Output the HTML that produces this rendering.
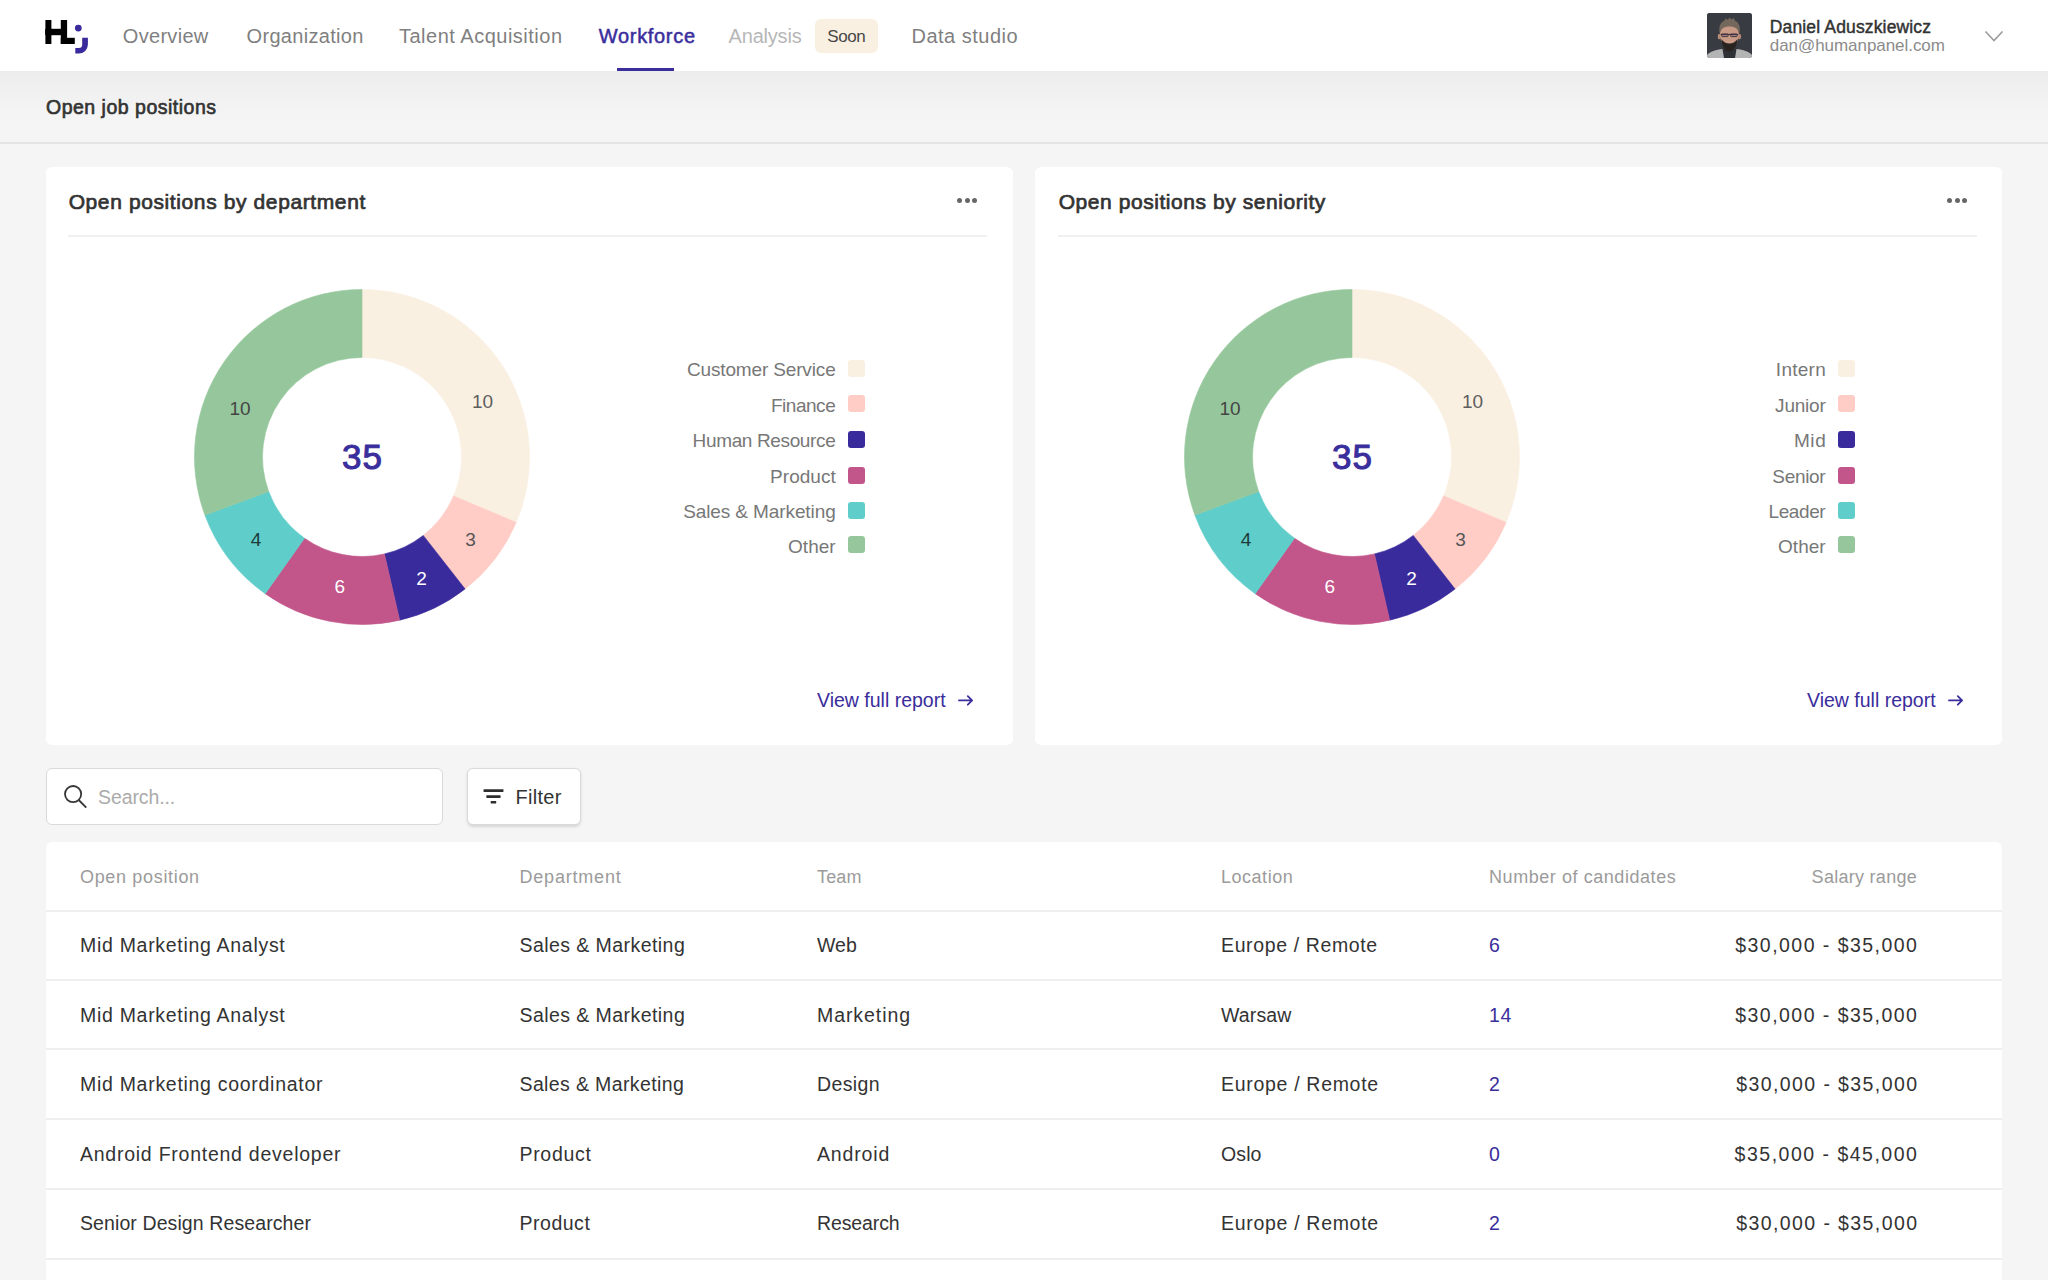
<!DOCTYPE html>
<html><head><meta charset="utf-8">
<style>
*{margin:0;padding:0;box-sizing:border-box}
html,body{width:2048px;height:1280px;overflow:hidden;background:#f5f5f5;font-family:"Liberation Sans",sans-serif;color:#333}
.a{position:absolute;white-space:nowrap;line-height:1}
#hdr{position:absolute;left:0;top:0;width:2048px;height:71px;background:#fff;z-index:2}
#sub{position:absolute;left:0;top:71px;width:2048px;height:73px;background:linear-gradient(#ececec 0px,#f0f0f0 18px,#f4f4f4 42px,#f5f5f5 60px);border-bottom:2px solid #e4e4e4}
.nav{font-size:20px;color:#7f7f7f;letter-spacing:0.3px}
.card{position:absolute;background:#fff;border-radius:6px}
.ttl{font-size:21px;font-weight:normal;color:#333;-webkit-text-stroke:0.7px #333;letter-spacing:0.1px}
.hr{position:absolute;height:2px;background:#f0f0f0}
.dot{position:absolute;width:5px;height:5px;border-radius:50%;background:#676767}
.lg{font-size:19px;color:#777;letter-spacing:-0.15px}
.sq{position:absolute;width:17px;height:17px;border-radius:3px}
.lbl{font-size:19px;text-align:center;width:40px}
.vfr{font-size:19.5px;color:#3a2d9c}
.th{font-size:18px;color:#9b9b9b;letter-spacing:0.55px}
.td{font-size:19.5px;color:#333;letter-spacing:0.55px}
.sal{letter-spacing:1.4px}
.rowline{position:absolute;left:0;width:1956px;height:2px;background:#efefef}
</style></head><body>

<div id="hdr">
  <!-- logo -->
  <svg class="a" style="left:0;top:0" width="100" height="71" viewBox="0 0 100 71">
    <rect x="45.4" y="20" width="6" height="24" fill="#000"/>
    <rect x="45.2" y="28.8" width="21.8" height="6.4" fill="#000"/>
    <rect x="60.8" y="20" width="6.3" height="24" fill="#000"/>
    <rect x="60.8" y="37.8" width="14" height="6.2" fill="#000"/>
    <circle cx="78.3" cy="28.1" r="3.4" fill="#3a2b9c"/>
    <path d="M82.2 37.85H87.9V44.4A9.2 9.2 0 0 1 78.7 53.6H75.3V48.1H78.7A3.5 3.5 0 0 0 82.2 44.6Z" fill="#3a2b9c"/>
  </svg>
  <div class="a nav" style="left:122.8px;top:26px">Overview</div>
  <div class="a nav" style="left:246.6px;top:26px">Organization</div>
  <div class="a nav" style="left:399px;top:26px;letter-spacing:0.5px">Talent Acquisition</div>
  <div class="a nav" style="left:598.8px;top:26px;color:#3a2d9c;-webkit-text-stroke:0.5px #3a2d9c;letter-spacing:0.68px">Workforce</div>
  <div class="a" style="left:617px;top:68px;width:57px;height:3px;background:#3a2d9c"></div>
  <div class="a nav" style="left:728.6px;top:26px;color:#b7b7b7;letter-spacing:-0.2px">Analysis</div>
  <div class="a" style="left:815px;top:18.5px;width:62.5px;height:34px;background:#faf0e1;border-radius:6px"></div>
  <div class="a" style="left:827.3px;top:27.5px;font-size:17px;color:#474747;letter-spacing:-0.45px">Soon</div>
  <div class="a nav" style="left:911.5px;top:26px;letter-spacing:0.5px">Data studio</div>

  <!-- avatar -->
  <div class="a" style="left:1707px;top:13px;width:45px;height:45px;border-radius:3px;background:#383c42;overflow:hidden">
    <svg width="45" height="45" viewBox="0 0 45 45" style="filter:blur(0.3px)">
      <rect width="45" height="45" fill="#383c42"/>
      <path d="M0 45V42C3 38.5 9 36.8 15.5 36H29.5C36 36.8 42 38.5 45 42V45Z" fill="#b3b5b5"/>
      <path d="M15.5 36H29.5L28 45H17Z" fill="#2e3135"/>
      <rect x="18.5" y="31" width="8" height="6" fill="#8f6a5a"/>
      <ellipse cx="12.2" cy="23.5" rx="1.5" ry="2.8" fill="#b78a76"/>
      <ellipse cx="32.6" cy="23.5" rx="1.5" ry="2.8" fill="#b78a76"/>
      <ellipse cx="22.4" cy="22" rx="9.6" ry="11.3" fill="#c99a85"/>
      <path d="M14.4 26C15 34 18.2 38.4 22.4 38.6C26.6 38.4 29.8 34 30.4 26C28.4 29.2 25.8 30.4 22.4 30.4C19 30.4 16.4 29.2 14.4 26Z" fill="#2a2420"/>
      <path d="M19.2 28.3C20.6 29.2 24.2 29.2 25.6 28.3C24.8 29.6 20 29.6 19.2 28.3Z" fill="#e6c4bc"/>
      <path d="M12.6 20.5C11.4 14 13.6 9 17.6 7.6L18.6 5.2L20.8 6.8L22.6 4.6L24.6 6.6L26.8 5L28 7.8C32 9.2 33.8 14 32.4 20.5C31.2 16 28.2 13.6 22.4 13.6C16.6 13.6 13.8 16 12.6 20.5Z" fill="#74675b"/>
      <path d="M13.6 21.4H31.2" stroke="#3a3040" stroke-width="1.1"/>
      <rect x="14.6" y="21" width="6.6" height="2.6" rx="0.8" fill="#5a4a63" fill-opacity="0.35" stroke="#3a3040" stroke-width="0.9"/>
      <rect x="23.6" y="21" width="6.6" height="2.6" rx="0.8" fill="#5a4a63" fill-opacity="0.35" stroke="#3a3040" stroke-width="0.9"/>
    </svg>
  </div>
  <div class="a" style="left:1769.75px;top:19.1px;font-size:17.5px;font-weight:normal;color:#333;-webkit-text-stroke:0.45px #333;letter-spacing:0.15px">Daniel Aduszkiewicz</div>
  <div class="a" style="left:1769.75px;top:37px;font-size:17px;color:#8b8b8b;letter-spacing:-0.05px">dan@humanpanel.com</div>
  <svg class="a" style="left:1984px;top:30px" width="20" height="13" viewBox="0 0 20 13">
    <path d="M1.5 1.5L10 10.5L18.5 1.5" fill="none" stroke="#9b9b9b" stroke-width="1.6"/>
  </svg>
</div>

<div id="sub">
  <div class="a" style="left:46px;top:27px;font-size:19.5px;font-weight:normal;color:#333;-webkit-text-stroke:0.65px #333;letter-spacing:0.5px">Open job positions</div>
</div>

<!-- card 1 -->
<div class="card" style="left:46px;top:167px;width:967px;height:578px" id="c1">
<div class="a ttl" style="left:22.65px;top:24px;letter-spacing:0.61px">Open positions by department</div>
<div class="hr" style="left:22px;top:67.5px;width:919px"></div>
<div class="dot" style="left:910.90px;top:30.5px"></div>
<div class="dot" style="left:918.60px;top:30.5px"></div>
<div class="dot" style="left:926.25px;top:30.5px"></div>
<svg class="a" style="left:145.5px;top:119.5px" width="340" height="340" viewBox="-170 -170 340 340"><path fill="#faf0e2" stroke="#faf0e2" stroke-width="0.6" d="M0.00 -167.50A167.5 167.5 0 0 1 154.18 65.45L91.59 38.88A99.5 99.5 0 0 0 0.00 -99.50Z"/>
<path fill="#ffcdc6" stroke="#ffcdc6" stroke-width="0.6" d="M154.18 65.45A167.5 167.5 0 0 1 103.12 131.99L61.26 78.41A99.5 99.5 0 0 0 91.59 38.88Z"/>
<path fill="#3a2b9c" stroke="#3a2b9c" stroke-width="0.6" d="M103.12 131.99A167.5 167.5 0 0 1 37.68 163.21L22.38 96.95A99.5 99.5 0 0 0 61.26 78.41Z"/>
<path fill="#c2558a" stroke="#c2558a" stroke-width="0.6" d="M37.68 163.21A167.5 167.5 0 0 1 -96.79 136.70L-57.50 81.21A99.5 99.5 0 0 0 22.38 96.95Z"/>
<path fill="#5fcdc9" stroke="#5fcdc9" stroke-width="0.6" d="M-96.79 136.70A167.5 167.5 0 0 1 -157.10 58.11L-93.32 34.52A99.5 99.5 0 0 0 -57.50 81.21Z"/>
<path fill="#96c79c" stroke="#96c79c" stroke-width="0.6" d="M-157.10 58.11A167.5 167.5 0 0 1 -0.00 -167.50L-0.00 -99.50A99.5 99.5 0 0 0 -93.32 34.52Z"/>
</svg>
<div class="a" style="left:266.6px;top:272.2px;width:100px;text-align:center;font-size:35px;font-weight:normal;-webkit-text-stroke:1px #3a2d9c;color:#3a2d9c;letter-spacing:1.2px">35</div>
<div class="a lbl" style="left:416.5px;top:224.66px;color:#5e5e5e">10</div>
<div class="a lbl" style="left:404.6px;top:362.96px;color:#555">3</div>
<div class="a lbl" style="left:355.6px;top:401.86px;color:#fff">2</div>
<div class="a lbl" style="left:273.8px;top:409.96px;color:#fff">6</div>
<div class="a lbl" style="left:190.0px;top:363.16px;color:#1d3b3a">4</div>
<div class="a lbl" style="left:174.1px;top:232.16px;color:#444">10</div>
<div class="a lg" style="right:177.450px;top:193.15px;letter-spacing:-0.150px">Customer Service</div>
<div class="sq" style="left:802px;top:192.70px;background:#faf0e2"></div>
<div class="a lg" style="right:177.783px;top:228.65px;letter-spacing:-0.483px">Finance</div>
<div class="sq" style="left:802px;top:228.20px;background:#ffcdc6"></div>
<div class="a lg" style="right:177.665px;top:264.35px;letter-spacing:-0.365px">Human Resource</div>
<div class="sq" style="left:802px;top:263.90px;background:#3a2b9c"></div>
<div class="a lg" style="right:177.283px;top:299.95px;letter-spacing:0.017px">Product</div>
<div class="sq" style="left:802px;top:299.50px;background:#c2558a"></div>
<div class="a lg" style="right:177.400px;top:335.45px;letter-spacing:-0.100px">Sales &amp; Marketing</div>
<div class="sq" style="left:802px;top:335.00px;background:#5fcdc9"></div>
<div class="a lg" style="right:177.250px;top:369.55px;letter-spacing:0.050px">Other</div>
<div class="sq" style="left:802px;top:369.10px;background:#96c79c"></div>
<div class="a vfr" style="left:771px;top:523.7px">View full report</div>
<svg class="a" style="left:910px;top:525px" width="19" height="17" viewBox="0 0 19 17"><path d="M3 8.4H16M11.8 4.1L16.1 8.4L11.8 12.7" fill="none" stroke="#3a2d9c" stroke-width="1.75" stroke-linecap="round" stroke-linejoin="round"/></svg>
</div>
<!-- card 2 -->
<div class="card" style="left:1035px;top:167px;width:967px;height:578px" id="c2">
<div class="a" style="left:1px;top:0;width:967px;height:578px"><div class="a ttl" style="left:22.65px;top:24px;letter-spacing:0.56px">Open positions by seniority</div>
<div class="hr" style="left:22px;top:67.5px;width:919px"></div>
<div class="dot" style="left:910.90px;top:30.5px"></div>
<div class="dot" style="left:918.60px;top:30.5px"></div>
<div class="dot" style="left:926.25px;top:30.5px"></div>
<svg class="a" style="left:145.5px;top:119.5px" width="340" height="340" viewBox="-170 -170 340 340"><path fill="#faf0e2" stroke="#faf0e2" stroke-width="0.6" d="M0.00 -167.50A167.5 167.5 0 0 1 154.18 65.45L91.59 38.88A99.5 99.5 0 0 0 0.00 -99.50Z"/>
<path fill="#ffcdc6" stroke="#ffcdc6" stroke-width="0.6" d="M154.18 65.45A167.5 167.5 0 0 1 103.12 131.99L61.26 78.41A99.5 99.5 0 0 0 91.59 38.88Z"/>
<path fill="#3a2b9c" stroke="#3a2b9c" stroke-width="0.6" d="M103.12 131.99A167.5 167.5 0 0 1 37.68 163.21L22.38 96.95A99.5 99.5 0 0 0 61.26 78.41Z"/>
<path fill="#c2558a" stroke="#c2558a" stroke-width="0.6" d="M37.68 163.21A167.5 167.5 0 0 1 -96.79 136.70L-57.50 81.21A99.5 99.5 0 0 0 22.38 96.95Z"/>
<path fill="#5fcdc9" stroke="#5fcdc9" stroke-width="0.6" d="M-96.79 136.70A167.5 167.5 0 0 1 -157.10 58.11L-93.32 34.52A99.5 99.5 0 0 0 -57.50 81.21Z"/>
<path fill="#96c79c" stroke="#96c79c" stroke-width="0.6" d="M-157.10 58.11A167.5 167.5 0 0 1 -0.00 -167.50L-0.00 -99.50A99.5 99.5 0 0 0 -93.32 34.52Z"/>
</svg>
<div class="a" style="left:266.6px;top:272.2px;width:100px;text-align:center;font-size:35px;font-weight:normal;-webkit-text-stroke:1px #3a2d9c;color:#3a2d9c;letter-spacing:1.2px">35</div>
<div class="a lbl" style="left:416.5px;top:224.66px;color:#5e5e5e">10</div>
<div class="a lbl" style="left:404.6px;top:362.96px;color:#555">3</div>
<div class="a lbl" style="left:355.6px;top:401.86px;color:#fff">2</div>
<div class="a lbl" style="left:273.8px;top:409.96px;color:#fff">6</div>
<div class="a lbl" style="left:190.0px;top:363.16px;color:#1d3b3a">4</div>
<div class="a lbl" style="left:174.1px;top:232.16px;color:#444">10</div>
<div class="a lg" style="right:177.050px;top:193.15px;letter-spacing:0.250px">Intern</div>
<div class="sq" style="left:802px;top:192.70px;background:#faf0e2"></div>
<div class="a lg" style="right:177.530px;top:228.65px;letter-spacing:-0.230px">Junior</div>
<div class="sq" style="left:802px;top:228.20px;background:#ffcdc6"></div>
<div class="a lg" style="right:176.750px;top:264.35px;letter-spacing:0.550px">Mid</div>
<div class="sq" style="left:802px;top:263.90px;background:#3a2b9c"></div>
<div class="a lg" style="right:177.610px;top:299.95px;letter-spacing:-0.310px">Senior</div>
<div class="sq" style="left:802px;top:299.50px;background:#c2558a"></div>
<div class="a lg" style="right:177.690px;top:335.45px;letter-spacing:-0.390px">Leader</div>
<div class="sq" style="left:802px;top:335.00px;background:#5fcdc9"></div>
<div class="a lg" style="right:177.250px;top:369.55px;letter-spacing:0.050px">Other</div>
<div class="sq" style="left:802px;top:369.10px;background:#96c79c"></div>
<div class="a vfr" style="left:771px;top:523.7px">View full report</div>
<svg class="a" style="left:910px;top:525px" width="19" height="17" viewBox="0 0 19 17"><path d="M3 8.4H16M11.8 4.1L16.1 8.4L11.8 12.7" fill="none" stroke="#3a2d9c" stroke-width="1.75" stroke-linecap="round" stroke-linejoin="round"/></svg></div>
</div>

<!-- search -->
<div class="a" style="left:46px;top:768px;width:397px;height:56.5px;background:#fff;border:1.8px solid #dadada;border-radius:6px"></div>
<svg class="a" style="left:60px;top:782px" width="30" height="30" viewBox="0 0 30 30">
  <circle cx="13.1" cy="12.1" r="8.1" fill="none" stroke="#363636" stroke-width="1.8"/>
  <path d="M18.9 18.2L25.6 24.9" stroke="#363636" stroke-width="1.9" stroke-linecap="square"/>
</svg>
<div class="a" style="left:98px;top:788px;font-size:19.5px;color:#ababab;letter-spacing:-0.1px">Search...</div>

<div class="a" style="left:467px;top:768px;width:114px;height:56.5px;background:#fff;border:1.8px solid #dadada;border-radius:6px;box-shadow:0 1.5px 3px rgba(0,0,0,0.13)"></div>
<svg class="a" style="left:480px;top:785px" width="28" height="22" viewBox="0 0 28 22"><g fill="#2e2e2e"><rect x="3.5" y="4.2" width="20" height="2.7" rx="0.6"/><rect x="6.3" y="10.2" width="14.3" height="2.7" rx="0.6"/><rect x="10.7" y="15.9" width="5.5" height="2.7" rx="0.6"/></g></svg>
<div class="a" style="left:515.5px;top:786.5px;font-size:20px;color:#333;letter-spacing:0.3px">Filter</div>

<!-- table -->
<div class="card" style="left:46px;top:842px;width:1956px;height:460px" id="tbl">
<div class="a th" style="left:34px;top:26.2px;letter-spacing:0.667px">Open position</div>
<div class="a th" style="left:473.5px;top:26.2px;letter-spacing:0.794px">Department</div>
<div class="a th" style="left:771px;top:26.2px;letter-spacing:0.150px">Team</div>
<div class="a th" style="left:1175px;top:26.2px;letter-spacing:0.521px">Location</div>
<div class="a th" style="left:1443px;top:26.2px;letter-spacing:0.561px">Number of candidates</div>
<div class="a th" style="right:85px;top:26.2px;letter-spacing:0.277px">Salary range</div>
<div class="rowline" style="top:67.5px"></div>
<div class="a td" style="left:34px;top:94.20px;letter-spacing:0.700px">Mid Marketing Analyst</div>
<div class="a td" style="left:473.5px;top:94.20px;letter-spacing:0.437px">Sales &amp; Marketing</div>
<div class="a td" style="left:771px;top:94.20px;letter-spacing:0.050px">Web</div>
<div class="a td" style="left:1175px;top:94.20px;letter-spacing:0.621px">Europe / Remote</div>
<div class="a td" style="left:1443px;top:94.20px;color:#3a2d9c">6</div>
<div class="a td sal" style="right:83.6px;top:94.20px;letter-spacing:1.462px">$30,000 - $35,000</div>
<div class="rowline" style="top:136.50px"></div>
<div class="a td" style="left:34px;top:163.70px;letter-spacing:0.700px">Mid Marketing Analyst</div>
<div class="a td" style="left:473.5px;top:163.70px;letter-spacing:0.437px">Sales &amp; Marketing</div>
<div class="a td" style="left:771px;top:163.70px;letter-spacing:0.925px">Marketing</div>
<div class="a td" style="left:1175px;top:163.70px;letter-spacing:0.150px">Warsaw</div>
<div class="a td" style="left:1443px;top:163.70px;color:#3a2d9c">14</div>
<div class="a td sal" style="right:83.6px;top:163.70px;letter-spacing:1.462px">$30,000 - $35,000</div>
<div class="rowline" style="top:206.25px"></div>
<div class="a td" style="left:34px;top:233.20px;letter-spacing:0.708px">Mid Marketing coordinator</div>
<div class="a td" style="left:473.5px;top:233.20px;letter-spacing:0.375px">Sales &amp; Marketing</div>
<div class="a td" style="left:771px;top:233.20px;letter-spacing:0.390px">Design</div>
<div class="a td" style="left:1175px;top:233.20px;letter-spacing:0.693px">Europe / Remote</div>
<div class="a td" style="left:1443px;top:233.20px;color:#3a2d9c">2</div>
<div class="a td sal" style="right:83.6px;top:233.20px;letter-spacing:1.400px">$30,000 - $35,000</div>
<div class="rowline" style="top:276.00px"></div>
<div class="a td" style="left:34px;top:302.70px;letter-spacing:0.750px">Android Frontend developer</div>
<div class="a td" style="left:473.5px;top:302.70px;letter-spacing:0.683px">Product</div>
<div class="a td" style="left:771px;top:302.70px;letter-spacing:0.850px">Android</div>
<div class="a td" style="left:1175px;top:302.70px;letter-spacing:0.117px">Oslo</div>
<div class="a td" style="left:1443px;top:302.70px;color:#3a2d9c">0</div>
<div class="a td sal" style="right:83.6px;top:302.70px;letter-spacing:1.500px">$35,000 - $45,000</div>
<div class="rowline" style="top:345.75px"></div>
<div class="a td" style="left:34px;top:372.20px;letter-spacing:0.098px">Senior Design Researcher</div>
<div class="a td" style="left:473.5px;top:372.20px;letter-spacing:0.517px">Product</div>
<div class="a td" style="left:771px;top:372.20px;letter-spacing:-0.107px">Research</div>
<div class="a td" style="left:1175px;top:372.20px;letter-spacing:0.693px">Europe / Remote</div>
<div class="a td" style="left:1443px;top:372.20px;color:#3a2d9c">2</div>
<div class="a td sal" style="right:83.6px;top:372.20px;letter-spacing:1.400px">$30,000 - $35,000</div>
<div class="rowline" style="top:415.50px"></div>
</div>

</body></html>
